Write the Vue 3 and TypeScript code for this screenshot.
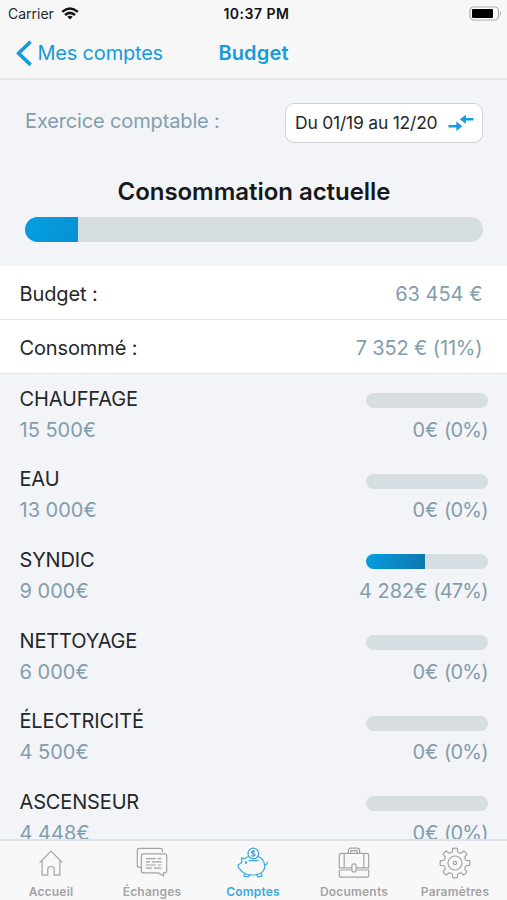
<script setup lang="ts">
interface BudgetLine {
  name: string
  amount: string
  spent: string
  percent: number
}

const lines: BudgetLine[] = [
  { name: 'CHAUFFAGE', amount: '15 500€', spent: '0€', percent: 0 },
  { name: 'EAU', amount: '13 000€', spent: '0€', percent: 0 },
  { name: 'SYNDIC', amount: '9 000€', spent: '4 282€', percent: 47 },
  { name: 'NETTOYAGE', amount: '6 000€', spent: '0€', percent: 0 },
  { name: 'ÉLECTRICITÉ', amount: '4 500€', spent: '0€', percent: 0 },
  { name: 'ASCENSEUR', amount: '4 448€', spent: '0€', percent: 0 },
]

const tabs = ['Accueil', 'Échanges', 'Comptes', 'Documents', 'Paramètres']

// Outline of an eight-toothed cog centred on (16, 16)
const point = (radius: number, degrees: number): string => {
  const angle = (degrees * Math.PI) / 180
  return `${(16 + radius * Math.cos(angle)).toFixed(2)} ${(16 + radius * Math.sin(angle)).toFixed(2)}`
}
const gear =
  Array.from({ length: 8 }, (_, i) => {
    const a = i * 45 - 90
    return `${i ? 'L' : 'M'}${point(11.6, a - 13)}L${point(14.8, a - 9)}Q${point(15.2, a)} ${point(14.8, a + 9)}L${point(11.6, a + 13)}Q${point(10.4, a + 22.5)} ${point(11.6, a + 32)}`
  }).join('') + 'Z'
</script>

<template>
  <div class="screen">
    <header class="top">
      <div class="status">
        <div class="carrier">
          <span class="carrier-name">Carrier</span>
          <svg width="18" height="13" viewBox="0 0 18 13" fill="none" stroke="#111" stroke-width="2.5">
            <path d="M1.2 4.9Q9-1.8 16.8 4.9M4 8Q9 3.7 14 8" />
            <path d="M6.3 9.7Q9 7.7 11.7 9.7L9 12.6Z" fill="#111" stroke="none" />
          </svg>
        </div>
        <div class="clock">10:37 PM</div>
        <div class="battery">
          <svg width="33" height="15" viewBox="0 0 33 15">
            <rect x="1" y="1" width="28.4" height="13" rx="3.6" fill="#fff" stroke="#aaa" stroke-width="1.2" />
            <rect x="3" y="3" width="21" height="9" rx="1" fill="#000" />
            <path d="M31 5.2Q33 7.5 31 9.8Z" fill="#aaa" />
          </svg>
        </div>
      </div>
      <nav class="nav">
        <div class="back">
          <svg width="17" height="27" viewBox="0 0 17 27" fill="none" stroke="#149bdc" stroke-width="3.6">
            <path d="M14.6 1.7L2.6 13.3L14.6 24.9" />
          </svg>
          <span class="back-label">Mes comptes</span>
        </div>
        <div class="nav-title">Budget</div>
      </nav>
    </header>

    <main class="content">
      <section class="summary">
        <div class="period-row">
          <span class="period-label">Exercice comptable :</span>
          <button class="period" type="button">
            <span>Du 01/19 au 12/20</span>
            <svg width="26" height="17" viewBox="0 0 26 17" fill="#149fe0">
              <path d="M.5 11H8.3V7.6L14.4 12.3L8.3 17V13.4H.5ZM25.5 4.1H17.9V.7L11.8 5.3L17.9 10V6.5H25.5Z" />
            </svg>
          </button>
        </div>
        <h1 class="heading">Consommation actuelle</h1>
        <div class="meter"><div class="meter-fill" :style="{ width: '11.5%' }"></div></div>
      </section>

      <section class="totals">
        <div class="total"><span class="total-label">Budget :</span><span class="total-value">63 454 €</span></div>
        <div class="total"><span class="total-label">Consommé :</span><span class="total-value consumed">7 352 € (11%)</span></div>
      </section>

      <section class="lines">
        <div v-for="line in lines" :key="line.name" class="line">
          <div class="line-top">
            <span class="name">{{ line.name }}</span>
            <div class="bar">
              <div v-if="line.percent" class="bar-fill" :style="{ width: line.percent + 1 + '%' }"></div>
            </div>
          </div>
          <div class="line-bottom">
            <span class="amount">{{ line.amount }}</span>
            <span class="spent">{{ line.spent }} <span class="share">({{ line.percent }}%)</span></span>
          </div>
        </div>
      </section>
    </main>

    <footer class="tabs">
      <div v-for="(tab, i) in tabs" :key="tab" class="tab" :class="{ active: i === 2 }">
        <svg class="icon" width="32" height="32" viewBox="0 0 32 32">
          <g v-if="i === 0">
            <path d="M4.6 15.6L16 4L27.4 15.6" />
            <path d="M7.1 13.8V28.2H12.8V22Q12.8 19.5 16 19.5T19.2 22V28.2H24.9V13.8" />
          </g>
          <g v-else-if="i === 1">
            <path d="M5.4 20.3H3.3Q1.3 20.3 1.3 18.3V3.3Q1.3 1.3 3.3 1.3H24.5Q26.5 1.3 26.5 3.3V5.3" />
            <path d="M7.5 6.9H28.5Q30.7 6.9 30.7 9V23.7Q30.7 25.9 28.5 25.9H27.5V29L22.6 25.9H7.5Q5.4 25.9 5.4 23.7V9Q5.4 6.9 7.5 6.9Z" />
            <path d="M10 11.7H19.5M21.5 11.7H25.5M10 14.9H14M16 14.9H25.5M10 18H20M22 18H25.5M10 21.2H16M18 21.2H25.5" />
          </g>
          <g v-else-if="i === 2">
            <circle cx="16.3" cy="6.5" r="5.3" />
            <path d="M18.2 4.6Q16.3 3.4 14.7 4.7Q14.2 6.2 16.3 6.5Q18.7 7 17.9 8.4Q16.4 9.6 14.4 8.4M16.3 2.9V10" />
            <path d="M11.5 13.6H21.5M11.8 9.5Q9.2 10.2 7.5 11.8L4.7 11V15.3Q3.5 17 1.2 17.7V20.5Q3.2 21.8 4.5 24.2Q8.2 28 16 28Q23.8 28 26.4 23.8Q28.4 20.7 27.5 17Q26 11 20.9 9.5M27.5 17Q30.2 18.5 30.6 14.7M8 26.5L7 29.3L11.5 29.8L12 28M20 28L20.6 29.8L25 29.3L24.3 26.2" />
            <circle cx="9" cy="15.5" r=".7" fill="currentColor" />
          </g>
          <g v-else-if="i === 3">
            <path d="M10.4 6V3.6Q10.4 1.2 12.8 1.2H19.2Q21.6 1.2 21.6 3.6V6M12.8 6V3.7H19.2V6" />
            <path d="M3.4 6.3H28.6Q30.7 6.3 30.7 8.4V20.8H18.1M13.9 20.8H1.3V8.4Q1.3 6.3 3.4 6.3M6.2 6.3V20.8M25.8 6.3V20.8" />
            <path d="M1.3 23V28.2Q1.3 30.2 3.3 30.2H28.7Q30.7 30.2 30.7 28.2V23H18.1M13.9 23H1.3" />
            <rect x="13.9" y="16.8" width="4.2" height="8.2" rx="2" />
          </g>
          <g v-else>
            <path :d="gear" />
            <circle cx="16" cy="16" r="7" />
            <circle cx="16" cy="16" r="1.6" />
          </g>
        </svg>
        <span class="tab-label">{{ tab }}</span>
      </div>
    </footer>
  </div>
</template>

<style>
body {
  margin: 0;
}
</style>

<style scoped>
.screen {
  width: 507px;
  height: 900px;
  display: flex;
  flex-direction: column;
  overflow: hidden;
  background: #f2f4f8;
  font-family: Inter, "Liberation Sans", sans-serif;
  color: #252729;
}
.top {
  flex: none;
  height: 80px;
  box-sizing: border-box;
  background: #f7f7f8;
  border-bottom: 2px solid #e5e6e8;
}
.status {
  height: 27px;
  display: grid;
  grid-template-columns: 1fr auto 1fr;
  align-items: center;
  padding: 0 5px 0 8px;
}
.carrier {
  display: flex;
  align-items: center;
  gap: 7px;
}
.carrier-name {
  font-size: 14px;
}
.clock {
  padding-left: 3px;
  font-size: 14px;
  font-weight: 600;
  letter-spacing: 0.5px;
  color: #111;
}
.battery {
  display: flex;
  justify-content: flex-end;
  margin-top: -1px;
}
.nav {
  height: 52px;
  display: grid;
  grid-template-columns: 1fr auto 1fr;
  align-items: center;
  color: #149bdc;
  padding: 0 16px;
  font-size: 20px;
}
.back {
  display: flex;
  align-items: center;
  gap: 4.5px;
}
.back-label {
  letter-spacing: -0.2px;
}
.nav-title {
  font-weight: 600;
  letter-spacing: 0.15px;
}
.content {
  flex: 1;
  min-height: 0;
  overflow: hidden;
}
.summary {
  height: 186px;
  box-sizing: border-box;
  padding: 23px 24px 0 25px;
}
.period-row {
  display: flex;
  justify-content: space-between;
  height: 40px;
}
.period-label {
  font-size: 20px;
  line-height: 36px;
  letter-spacing: -0.14px;
  color: #829ead;
}
.period {
  display: flex;
  align-items: center;
  justify-content: space-between;
  width: 198px;
  height: 40px;
  box-sizing: border-box;
  padding: 0 8px 1px 9px;
  background: #fff;
  border: 1px solid #d0d2d4;
  border-radius: 9px;
  font: 400 17.5px Inter, sans-serif;
  letter-spacing: -0.22px;
  color: #252729;
}
.heading {
  margin: 33px 0 10px;
  font-size: 24px;
  line-height: 31px;
  font-weight: 600;
  letter-spacing: -0.04px;
  text-align: center;
  color: #16181a;
  white-space: nowrap;
}
.meter {
  height: 25px;
  border-radius: 13px;
  overflow: hidden;
  background: #d6dde0;
}
.meter-fill {
  height: 100%;
  background: linear-gradient(120deg, #069fe2, #0791d2);
}
.totals {
  background: #fff;
}
.total {
  height: 54px;
  box-sizing: border-box;
  display: flex;
  align-items: center;
  justify-content: space-between;
  padding: 2px 24.5px 0 19.5px;
  border-bottom: 1px solid #e4e6e8;
  font-size: 20px;
}
.total-label {
  letter-spacing: -0.12px;
}
.consumed {
  letter-spacing: -0.15px;
}
.total-value,
.amount,
.spent {
  color: #829dab;
}
.line {
  height: 80.7px;
  box-sizing: border-box;
  padding: 9px 19px 0 19.5px;
}
.line-top,
.line-bottom {
  display: flex;
  align-items: center;
  justify-content: space-between;
  height: 31px;
  font-size: 20px;
}
.name {
  letter-spacing: -0.15px;
}
.share {
  margin-right: 0.3px;
  letter-spacing: -0.8px;
}
.bar {
  width: 122px;
  height: 15px;
  margin-top: 4px;
  border-radius: 8px;
  overflow: hidden;
  background: #d7dee1;
}
.bar-fill {
  height: 100%;
  background: linear-gradient(120deg, #069fe2, #0f74aa);
}
.tabs {
  flex: none;
  height: 61px;
  box-sizing: border-box;
  display: grid;
  grid-template-columns: repeat(5, 101px);
  background: #f8f8f9;
  border-top: 2px solid #dfe2e6;
}
.tab {
  display: flex;
  flex-direction: column;
  align-items: center;
  padding: 6px 0 0 1px;
  color: #a2a3a4;
}
.tab.active {
  color: #38a9e0;
}
.icon {
  fill: none;
  stroke: currentColor;
  stroke-width: 1.2;
}
.tab-label {
  margin-top: 5px;
  font-size: 12px;
  line-height: 15px;
  font-weight: 600;
  letter-spacing: 0.2px;
}
</style>
